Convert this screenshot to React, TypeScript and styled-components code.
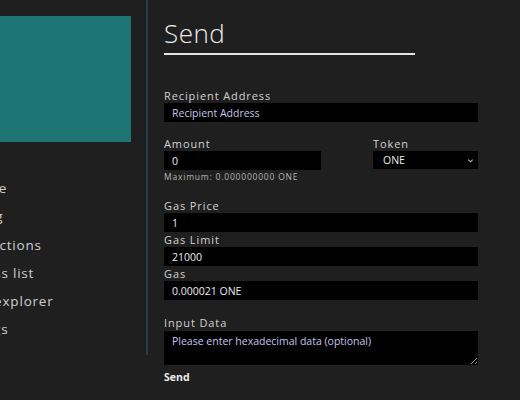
import * as React from "react";
import styled, { createGlobalStyle } from "styled-components";

const GlobalStyle = createGlobalStyle`
  html, body {
    margin: 0;
    padding: 0;
    background: #1f1f1f;
    overflow: hidden;
  }
  body {
    font-family: "Open Sans", "Noto Sans", sans-serif;
    color: #d6d6d6;
  }
`;

const Page = styled.div`
  display: flex;
  align-items: flex-start;
  width: 520px;
  height: 400px;
`;

const Sidebar = styled.aside`
  width: 146px;
  height: 355px;
  flex-shrink: 0;
  overflow: hidden;
  border-right: 2px solid #27403f;
`;

const SidebarInner = styled.div`
  margin-left: -48px;
  padding-top: 16px;
`;

const Banner = styled.div`
  width: 179px;
  height: 126px;
  background: #1d7573;
`;

const Nav = styled.ul`
  list-style: none;
  margin: 32px 0 0;
  padding: 0;
`;

const NavItem = styled.li`
  height: 28.3px;
  line-height: 28px;
  font-size: 13.5px;
  letter-spacing: 0.8px;
  color: #cfcfcf;
  white-space: nowrap;
`;

const Main = styled.main`
  flex: 1;
  padding: 15px 42px 0 16px;
`;

const Title = styled.h1`
  margin: 0;
  width: 251px;
  font-size: 26px;
  font-weight: 300;
  line-height: 36px;
  padding-bottom: 2px;
  letter-spacing: 0.5px;
  color: #ececec;
  border-bottom: 2px solid #e4e4e4;
`;

const Form = styled.div`
  margin-top: 33px;
  display: flex;
  flex-direction: column;
`;

const Group = styled.div<{ $gap?: number }>`
  margin-bottom: ${(p) => p.$gap ?? 0}px;
`;

const Row = styled.div`
  display: flex;
  justify-content: space-between;
`;

const Label = styled.div`
  font-size: 11px;
  line-height: 15px;
  letter-spacing: 0.9px;
  color: #d2d2d2;
`;

const Field = styled.input<{ $width?: number }>`
  box-sizing: border-box;
  display: block;
  width: ${(p) => (p.$width ? `${p.$width}px` : "100%")};
  height: 19px;
  border: none;
  outline: none;
  background: #000;
  color: #ececec;
  font-family: "Open Sans", "Noto Sans", sans-serif;
  font-size: 10.5px;
  padding: 0 8px;

  &::placeholder {
    color: #c8c4ec;
    opacity: 1;
  }
`;

const SelectBox = styled.div`
  box-sizing: border-box;
  display: flex;
  align-items: center;
  justify-content: space-between;
  width: 105px;
  height: 18px;
  background: #000;
  color: #ececec;
  font-size: 10.5px;
  padding: 0 4px 0 10px;
`;

const Hint = styled.div`
  font-size: 8.5px;
  line-height: 13px;
  letter-spacing: 0.8px;
  color: #b4b4b4;
`;

const DataArea = styled.textarea`
  box-sizing: border-box;
  display: block;
  width: 100%;
  height: 34px;
  margin-top: 1px;
  border: none;
  outline: none;
  background: #000;
  color: #ececec;
  font-family: "Open Sans", "Noto Sans", sans-serif;
  font-size: 10.5px;
  line-height: 14px;
  padding: 3px 8px;

  &::placeholder {
    color: #c8c4ec;
    opacity: 1;
  }
`;

const SendButton = styled.button`
  align-self: flex-start;
  margin-top: 5px;
  padding: 0;
  border: none;
  background: none;
  color: #ececec;
  font-family: "Open Sans", "Noto Sans", sans-serif;
  font-size: 10.5px;
  font-weight: 700;
  line-height: 14px;
`;

const Chevron = () => (
  <svg width="7" height="7" viewBox="0 0 8 8">
    <path d="M1.5 3 L4 5.5 L6.5 3" fill="none" stroke="#bbb" strokeWidth="1.2" />
  </svg>
);

const navItems = ["Balance", "Staking", "Transactions", "Address list", "Block explorer", "Settings"];

const App = () => (
  <>
    <GlobalStyle />
    <Page>
      <Sidebar>
        <SidebarInner>
          <Banner />
          <Nav>
            {navItems.map((item) => (
              <NavItem key={item}>{item}</NavItem>
            ))}
          </Nav>
        </SidebarInner>
      </Sidebar>
      <Main>
        <Title>Send</Title>
        <Form>
          <Group $gap={14}>
            <Label>Recipient Address</Label>
            <Field placeholder="Recipient Address" />
          </Group>
          <Group $gap={15}>
            <Row>
              <div>
                <Label>Amount</Label>
                <Field $width={157} defaultValue="0" />
                <Hint>Maximum: 0.000000000 ONE</Hint>
              </div>
              <div>
                <Label>Token</Label>
                <SelectBox>
                  ONE
                  <Chevron />
                </SelectBox>
              </div>
            </Row>
          </Group>
          <Group>
            <Label>Gas Price</Label>
            <Field defaultValue="1" />
          </Group>
          <Group>
            <Label>Gas Limit</Label>
            <Field defaultValue="21000" />
          </Group>
          <Group $gap={15}>
            <Label>Gas</Label>
            <Field defaultValue="0.000021 ONE" readOnly />
          </Group>
          <Group>
            <Label>Input Data</Label>
            <DataArea placeholder="Please enter hexadecimal data (optional)" />
          </Group>
          <SendButton>Send</SendButton>
        </Form>
      </Main>
    </Page>
  </>
);

export default App;
